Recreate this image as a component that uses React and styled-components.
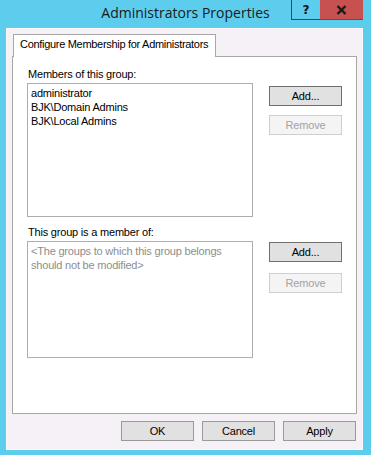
import styled, { createGlobalStyle } from 'styled-components';

const Global = createGlobalStyle`
  html, body {
    margin: 0;
    padding: 0;
    background: #5dcdee;
  }
  * { box-sizing: border-box; }
`;

const Frame = styled.div`
  width: 371px;
  height: 455px;
  background: #5dcdee;
  display: flex;
  flex-direction: column;
  font-family: "Liberation Sans", Arial, sans-serif;
  font-size: 11px;
  letter-spacing: -0.2px;
  color: #000;
`;

const TitleBar = styled.div`
  height: 28px;
  display: grid;
  grid-template-columns: 1fr auto 1fr;
  align-items: start;
`;

const Title = styled.div`
  grid-column: 2;
  font-family: "Open Sans", "Noto Sans", sans-serif;
  font-size: 14px;
  line-height: 20px;
  padding-top: 3px;
  color: #1a1a1a;
  letter-spacing: 0;
`;

const Caption = styled.div`
  grid-column: 3;
  justify-self: end;
  display: flex;
  margin-right: 8px;
`;

const HelpBtn = styled.div`
  width: 29px;
  height: 20px;
  border-left: 1px solid #2a4a63;
  border-bottom: 1px solid #2a4a63;
  display: flex;
  align-items: center;
  justify-content: center;
  font-family: "DejaVu Sans", sans-serif;
  font-weight: bold;
  font-size: 12px;
  color: #111;
`;

const CloseBtn = styled.div`
  width: 43px;
  height: 20px;
  background: #c75050;
  border-bottom: 1px solid #8f3a3a;
  display: flex;
  align-items: center;
  justify-content: center;
`;

const Client = styled.div`
  margin: 0 8px 5px 6px;
  flex: 1;
  background: #f6f1f6;
  border: 1px solid #fbf8fb;
  display: flex;
  flex-direction: column;
  padding: 5px 5px 0 5px;
`;

const TabStrip = styled.div`
  display: flex;
  padding-left: 1px;
  position: relative;
  z-index: 1;
`;

const Tab = styled.div`
  width: 203px;
  height: 23px;
  background: #fff;
  border: 1px solid #a7a7a7;
  border-bottom: none;
  padding: 3px 0 0 6px;
  line-height: 13px;
  white-space: nowrap;
  letter-spacing: -0.3px;
`;

const Panel = styled.div`
  height: 358px;
  background: #fff;
  border: 1px solid #a7a7a7;
  margin-top: -1px;
  padding: 11px 0 0 14px;
  display: flex;
  flex-direction: column;
  gap: 9px;
`;

const Section = styled.div`
  display: grid;
  grid-template-columns: 226px 73px;
  column-gap: 16px;
  row-gap: 2px;
`;

const Label = styled.div`
  grid-column: 1 / span 2;
  line-height: 13px;
  padding-left: 1px;
`;

const ListBox = styled.div`
  height: ${p => p.$h}px;
  border: 1px solid #abadb3;
  padding: 2px 3px;
  line-height: 14px;
  color: ${p => (p.$muted ? '#8d8d8d' : '#000')};
`;

const SideButtons = styled.div`
  display: flex;
  flex-direction: column;
  gap: ${p => p.$gap}px;
  padding-top: ${p => p.$top}px;
`;

const Button = styled.div`
  width: 73px;
  height: 20px;
  background: ${p => (p.$disabled ? '#f4f4f4' : '#e1e1e1')};
  border: 1px solid ${p => (p.$disabled ? '#cfcfcf' : p.$default ? '#6f6f6f' : '#9a9a9a')};
  color: ${p => (p.$disabled ? '#a2a2a2' : '#000')};
  display: flex;
  align-items: center;
  justify-content: center;
  line-height: 13px;
`;

const Footer = styled.div`
  display: flex;
  justify-content: flex-end;
  gap: 8px;
  padding: 7px 0 0 0;
  margin-right: 1px;
`;

export default function App() {
  return (
    <>
      <Global />
      <Frame>
        <TitleBar>
          <Title>Administrators Properties</Title>
          <Caption>
            <HelpBtn>?</HelpBtn>
            <CloseBtn>
              <svg width="11" height="10" viewBox="0 0 11 10">
                <path d="M1.5 1 L9.5 9 M9.5 1 L1.5 9" stroke="#1a1a1a" strokeWidth="2.4" />
              </svg>
            </CloseBtn>
          </Caption>
        </TitleBar>
        <Client>
          <TabStrip>
            <Tab>Configure Membership for Administrators</Tab>
          </TabStrip>
          <Panel>
            <Section>
              <Label>Members of this group:</Label>
              <ListBox $h={134}>
                <div>administrator</div>
                <div>BJK\Domain Admins</div>
                <div>BJK\Local Admins</div>
              </ListBox>
              <SideButtons $gap={9} $top={3}>
                <Button $default>Add...</Button>
                <Button $disabled>Remove</Button>
              </SideButtons>
            </Section>
            <Section>
              <Label>This group is a member of:</Label>
              <ListBox $h={117} $muted>
                <div>&lt;The groups to which this group belongs</div>
                <div>should not be modified&gt;</div>
              </ListBox>
              <SideButtons $gap={11} $top={1}>
                <Button $default>Add...</Button>
                <Button $disabled>Remove</Button>
              </SideButtons>
            </Section>
          </Panel>
          <Footer>
            <Button>OK</Button>
            <Button>Cancel</Button>
            <Button>Apply</Button>
          </Footer>
        </Client>
      </Frame>
    </>
  );
}
